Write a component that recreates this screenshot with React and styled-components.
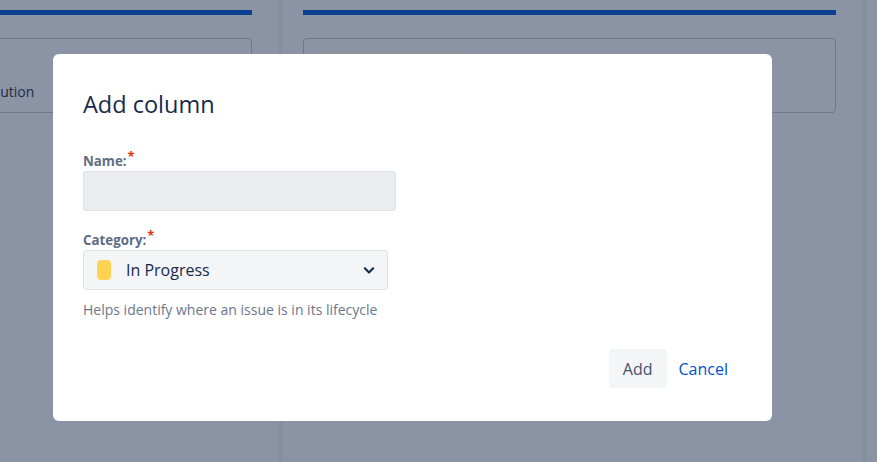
import React from 'react';
import styled, { createGlobalStyle } from 'styled-components';

const GlobalStyle = createGlobalStyle`
  html, body {
    margin: 0;
    padding: 0;
    background: #8b94a5;
    font-family: "Open Sans", "Noto Sans", "Liberation Sans", sans-serif;
  }
  * { box-sizing: border-box; }
`;

const Page = styled.div`
  position: relative;
  width: 877px;
  height: 462px;
  overflow: hidden;
  background: #8b94a5;
`;

// board behind the blanket
const Board = styled.div`
  display: flex;
  height: 100%;
  margin-left: -301px;
`;

const Column = styled.div`
  flex: 0 0 579px;
  height: 100%;
  padding: 10px 26px 0 20px;
  display: flex;
  flex-direction: column;
`;

const Divider = styled.div`
  flex: 0 0 5px;
  height: 100%;
  background: #868fa0;
`;

const ColumnBar = styled.div`
  height: 5px;
  background: #0d3f91;
  margin-bottom: 23px;
`;

const Card = styled.div`
  height: 75px;
  border: 1px solid #6f798b;
  border-radius: 4px;
  padding: ${(props) => props.padding || '0'};
  display: flex;
  flex-direction: column;
`;

const CardText = styled.div`
  font-size: 14px;
  color: #1e2c47;
  white-space: nowrap;
`;

const Pill = styled.div`
  width: 145px;
  height: 24px;
  border: 1px solid #8f8f86;
  border-radius: 4px;
`;

const Modal = styled.div`
  position: absolute;
  left: 53px;
  top: 54px;
  width: 719px;
  height: 367px;
  background: #fff;
  border-radius: 6px;
  padding: 34px 30px 0 30px;
  display: flex;
  flex-direction: column;
`;

const Title = styled.h2`
  margin: 0 0 33px 0;
  font-size: 23.5px;
  font-weight: 400;
  line-height: 32px;
  color: #172b4d;
`;

const Field = styled.div`
  display: flex;
  flex-direction: column;
  margin-bottom: ${(props) => props.gap || '0'};
`;

const Label = styled.label`
  font-size: 13.3px;
  font-weight: 700;
  color: #5e6c84;
  line-height: 16px;
  margin-bottom: 2px;
`;

const Required = styled.span`
  color: #de350b;
  font-size: 13px;
  position: relative;
  top: -5px;
  margin-left: 1px;
`;

const TextInput = styled.input`
  width: 313px;
  height: 40px;
  background: #ebecf0;
  border: 1px solid #dfe1e6;
  border-radius: 3px;
  outline: none;
  font-family: inherit;
  font-size: 14px;
`;

const Select = styled.div`
  width: 305px;
  height: 40px;
  background: #f4f5f7;
  border: 1px solid #dfe1e6;
  border-radius: 3px;
  display: flex;
  align-items: center;
  padding: 0 8px 0 13px;
`;

const Swatch = styled.span`
  width: 14px;
  height: 20px;
  border-radius: 4px;
  background: ${(props) => props.color};
  margin-right: 15px;
`;

const SelectText = styled.span`
  flex: 1;
  font-size: 16px;
  color: #172b4d;
`;

const HelpText = styled.div`
  margin-top: 10px;
  font-size: 14px;
  color: #6b778c;
`;

const Footer = styled.div`
  display: flex;
  justify-content: flex-end;
  align-items: center;
  margin-top: 30px;
  padding-right: 14px;
`;

const Button = styled.button`
  height: 39px;
  padding: ${(props) => (props.link ? '0 0 0 12px' : '0 14px')};
  border: none;
  border-radius: 3px;
  background: ${(props) => (props.link ? 'transparent' : '#f4f5f7')};
  color: ${(props) => (props.link ? '#0052cc' : '#42526e')};
  font-family: inherit;
  font-size: 16px;
  cursor: pointer;
`;

const Chevron = () => (
  <svg width="20" height="20" viewBox="0 0 24 24" fill="none">
    <path d="M7 10l5 5 5-5" stroke="#172b4d" strokeWidth="2.6" strokeLinecap="round" strokeLinejoin="round" />
  </svg>
);

const App = () => {
  return (
    <Page>
      <GlobalStyle />
      <Board>
        <Column>
          <ColumnBar />
          <Card padding="43px 0 0 245px">
            <CardText>Resolution</CardText>
          </Card>
        </Column>
        <Divider />
        <Column>
          <ColumnBar />
          <Card padding="12px 0 0 18px">
            <Pill />
          </Card>
        </Column>
        <Divider />
        <Column />
      </Board>

      <Modal>
        <Title>Add column</Title>
        <Field gap="21px">
          <Label>
            Name:<Required>*</Required>
          </Label>
          <TextInput type="text" />
        </Field>
        <Field>
          <Label>
            Category:<Required>*</Required>
          </Label>
          <Select>
            <Swatch color="#ffd351" />
            <SelectText>In Progress</SelectText>
            <Chevron />
          </Select>
          <HelpText>Helps identify where an issue is in its lifecycle</HelpText>
        </Field>
        <Footer>
          <Button>Add</Button>
          <Button link>Cancel</Button>
        </Footer>
      </Modal>
    </Page>
  );
};

export default App;
